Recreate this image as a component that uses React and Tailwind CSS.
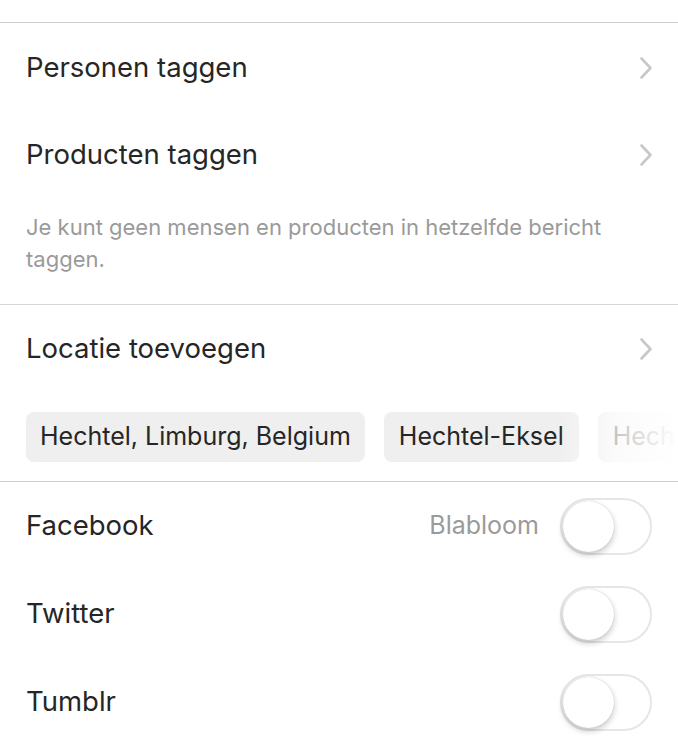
import React from "react";

const Chevron = () => (
  <svg width="14" height="24" viewBox="0 0 14 24" fill="none">
    <path d="M2.5 2.5 L11.5 12 L2.5 21.5" stroke="#c7c7cc" strokeWidth="2.6" strokeLinecap="round" strokeLinejoin="round" />
  </svg>
);

const Toggle = () => (
  <div className="relative w-[92px] h-[57px] rounded-full border-[2px] border-[#e6e6e6] bg-white">
    <div className="absolute left-[1px] top-[1.5px] w-[51px] h-[51px] rounded-full bg-white shadow-[0_3px_6px_rgba(0,0,0,0.22),0_0_1px_rgba(0,0,0,0.25)]" />
  </div>
);

const NavRow = ({ label }) => (
  <div className="h-[87px] flex items-center justify-between pl-[26px] pr-[25px]">
    <span className="text-[27.5px] text-[#262626]">{label}</span>
    <Chevron />
  </div>
);

const ToggleRow = ({ label, extra }) => (
  <div className="h-[88px] flex items-center justify-between pl-[26px] pr-[26px]">
    <span className="text-[27.5px] text-[#262626]">{label}</span>
    <div className="flex items-center gap-[21px]">
      {extra && <span className="text-[25px] text-[#9a9a9a]">{extra}</span>}
      <Toggle />
    </div>
  </div>
);

export default function App() {
  return (
    <div className="w-[678px] h-[748px] bg-white overflow-hidden" style={{ fontFamily: "Inter, 'Noto Sans', sans-serif" }}>
      <div className="h-[22px]" />
      <div className="h-px bg-[#cfcfcf]" />
      <div className="pt-[1px]">
        <NavRow label="Personen taggen" />
        <NavRow label="Producten taggen" />
      </div>
      <div className="pl-[26px] pr-[60px] pt-[13px] pb-[29px] text-[22px] leading-[32px] text-[#9a9a9a]">
        Je kunt geen mensen en producten in hetzelfde bericht taggen.
      </div>
      <div className="h-px bg-[#d6d6d6]" />
      <div className="h-[88px] flex items-center justify-between pl-[26px] pr-[25px]">
        <span className="text-[27.5px] text-[#262626]">Locatie toevoegen</span>
        <Chevron />
      </div>
      <div className="relative mt-[19px] mb-[19px] pl-[26px] flex gap-[19px] overflow-hidden whitespace-nowrap">
        <div className="h-[50px] px-[14px] flex items-center rounded-[8px] bg-[#efefef] text-[25px] text-[#262626] shrink-0">Hechtel, Limburg, Belgium</div>
        <div className="h-[50px] px-[15px] flex items-center rounded-[8px] bg-[#efefef] text-[25px] text-[#262626] shrink-0">Hechtel-Eksel</div>
        <div className="h-[50px] px-[15px] flex items-center rounded-[8px] bg-[#efefef] text-[25px] text-[#262626] shrink-0">Hechtel</div>
        <div className="absolute right-0 top-0 h-full w-[120px] bg-gradient-to-r from-white/0 via-white/75 to-white" />
      </div>
      <div className="h-px bg-[#cfcfcf]" />
      <ToggleRow label="Facebook" extra="Blabloom" />
      <ToggleRow label="Twitter" />
      <ToggleRow label="Tumblr" />
    </div>
  );
}
